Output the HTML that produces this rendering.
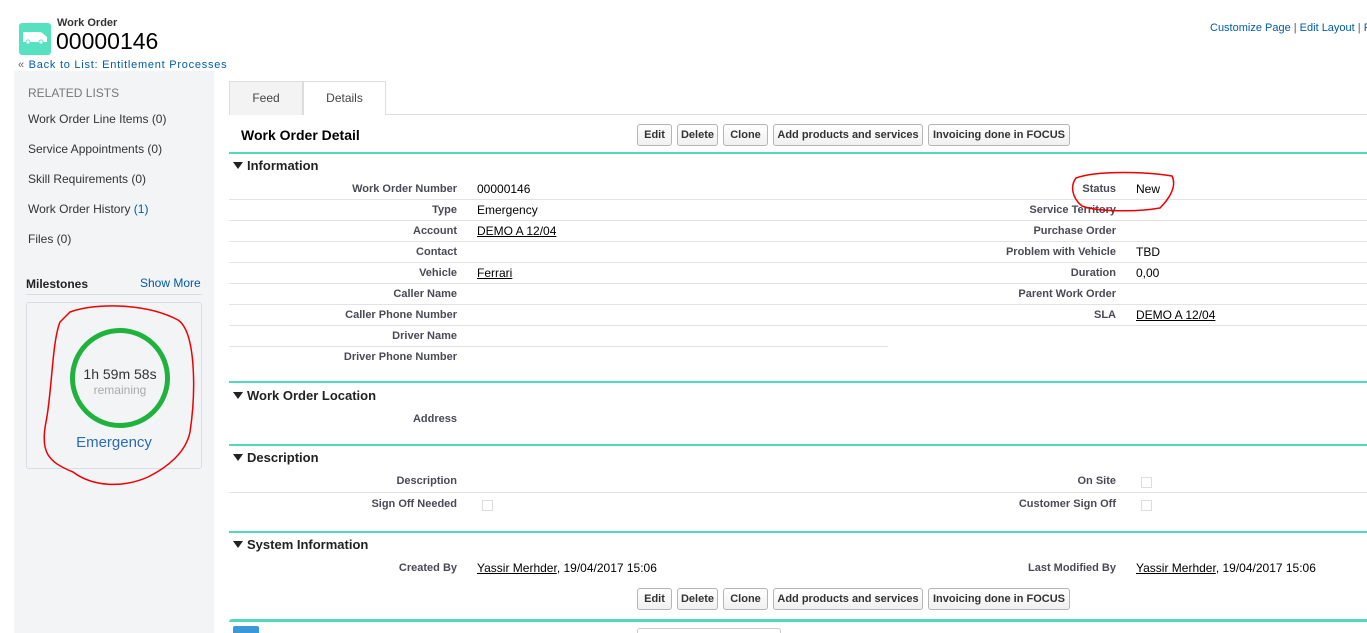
<!DOCTYPE html>
<html><head><meta charset="utf-8"><style>
*{margin:0;padding:0;box-sizing:border-box}
body{width:1367px;height:633px;overflow:hidden;background:#fff;font-family:"Liberation Sans",Arial,sans-serif;position:relative;color:#000}
.a{position:absolute;white-space:nowrap}
.lbl{position:absolute;font-size:11px;font-weight:bold;color:#4a4a56;text-align:right;white-space:nowrap;margin-top:1px}
.val{position:absolute;font-size:12px;color:#000;white-space:nowrap}
.u{text-decoration:underline}
.ln{position:absolute;height:1px;background:#e3e3e7}
.teal{position:absolute;left:229px;width:1138px;height:2px;background:#4fd9bd}
.sec{position:absolute;left:233px;font-size:13px;font-weight:bold;color:#222}
.sec:before{content:"";display:inline-block;border-left:5px solid transparent;border-right:5px solid transparent;border-top:7px solid #222;margin-right:4px;vertical-align:1px}
.btn{position:absolute;height:22px;border:1px solid #b5b5b5;border-radius:3px;background:linear-gradient(#fff,#f0f0f0);font-size:11px;font-weight:bold;color:#333;line-height:20px;text-align:center}
.rl{position:absolute;left:28px;font-size:12px;color:#333}
.rl span{color:#015ba7}
</style></head><body>
<div class="a" style="left:19px;top:23px;width:32px;height:32px;background:#56e2c0;border-radius:3px"></div>
<svg class="a" style="left:22px;top:31px" width="26" height="14" viewBox="0 0 26 14"><path d="M1 1h18l6 5v5H1z" fill="#fff"/><circle cx="6" cy="11" r="2.5" fill="#56e2c0"/><circle cx="19" cy="11" r="2.5" fill="#56e2c0"/><circle cx="6" cy="11" r="1.6" fill="#fff"/><circle cx="19" cy="11" r="1.6" fill="#fff"/></svg>
<div class="a" style="left:57px;top:17px;font-size:11px;font-weight:bold;color:#333">Work Order</div>
<div class="a" style="left:56px;top:28px;font-size:23px;color:#000">00000146</div>
<div class="a" style="left:18px;top:59px;font-size:11px;color:#015ba7;letter-spacing:0.75px"><span style="color:#666">«</span> Back to List: Entitlement Processes</div>
<div class="a" style="left:1210px;top:22px;font-size:11px;color:#015ba7">Customize Page <span style="color:#555">|</span> Edit Layout <span style="color:#555">|</span> P</div>
<div class="a" style="left:14px;top:71px;width:200px;height:562px;background:#f3f4f6"></div>
<div class="a" style="left:28px;top:86px;font-size:12px;color:#777">RELATED LISTS</div>
<div class="rl" style="top:112px">Work Order Line Items (0)</div>
<div class="rl" style="top:142px">Service Appointments (0)</div>
<div class="rl" style="top:172px">Skill Requirements (0)</div>
<div class="rl" style="top:202px">Work Order History <span>(1)</span></div>
<div class="rl" style="top:232px">Files (0)</div>
<div class="a" style="left:26px;top:277px;font-size:12px;font-weight:bold;color:#222">Milestones</div>
<div class="a" style="left:140px;top:276px;font-size:12px;color:#015ba7">Show More</div>
<div class="a" style="left:26px;top:294px;width:176px;height:1px;background:#d8dde6"></div>
<div class="a" style="left:26px;top:302px;width:176px;height:167px;border:1px solid #d8dde6;border-radius:3px"></div>
<div class="a" style="left:70px;top:328px;width:100px;height:100px;border:5px solid #1fb23c;border-radius:50%"></div>
<div class="a" style="left:70px;top:366px;width:100px;text-align:center;font-size:14px;color:#333">1h 59m 58s</div>
<div class="a" style="left:70px;top:383px;width:100px;text-align:center;font-size:12px;color:#aaa">remaining</div>
<div class="a" style="left:26px;top:434px;width:176px;text-align:center;font-size:15px;color:#2a6bb5">Emergency</div>
<svg class="a" style="left:38px;top:302px" width="160" height="186"><path d="M32 10C60 0 110 2 140 18 158 30 158 90 152 130 148 150 130 165 110 175 85 186 55 185 35 170 10 160 2 150 8 120 14 90 14 40 22 20Z" fill="none" stroke="#e00" stroke-width="1.5"/></svg>
<div class="a" style="left:229px;top:81px;width:74px;height:34px;background:#f3f3f3;border:1px solid #ddd;border-bottom:none;font-size:12px;color:#444;text-align:center;line-height:32px">Feed</div>
<div class="a" style="left:303px;top:81px;width:83px;height:34px;background:#fff;border:1px solid #ddd;border-bottom:none;font-size:12px;color:#444;text-align:center;line-height:32px">Details</div>
<div class="a" style="left:386px;top:114px;width:981px;height:1px;background:#ddd"></div>
<div class="a" style="left:241px;top:127px;font-size:14px;font-weight:bold">Work Order Detail</div>
<div class="btn" style="left:637px;top:124px;width:35px">Edit</div>
<div class="btn" style="left:677px;top:124px;width:41px">Delete</div>
<div class="btn" style="left:723px;top:124px;width:45px">Clone</div>
<div class="btn" style="left:773px;top:124px;width:150px">Add products and services</div>
<div class="btn" style="left:928px;top:124px;width:142px">Invoicing done in FOCUS</div>
<div class="teal" style="top:152px"></div>
<div class="sec" style="top:158px">Information</div>
<div class="lbl" style="right:910px;top:182px">Work Order Number</div><div class="val" style="left:477px;top:182px">00000146</div>
<div class="lbl" style="right:910px;top:203px">Type</div><div class="val" style="left:477px;top:203px">Emergency</div>
<div class="lbl" style="right:910px;top:224px">Account</div><div class="val u" style="left:477px;top:224px">DEMO A 12/04</div>
<div class="lbl" style="right:910px;top:245px">Contact</div>
<div class="lbl" style="right:910px;top:266px">Vehicle</div><div class="val u" style="left:477px;top:266px">Ferrari</div>
<div class="lbl" style="right:910px;top:287px">Caller Name</div>
<div class="lbl" style="right:910px;top:308px">Caller Phone Number</div>
<div class="lbl" style="right:910px;top:329px">Driver Name</div>
<div class="lbl" style="right:910px;top:350px">Driver Phone Number</div>
<div class="ln" style="left:229px;width:659px;top:199px"></div>
<div class="ln" style="left:229px;width:659px;top:220px"></div>
<div class="ln" style="left:229px;width:659px;top:241px"></div>
<div class="ln" style="left:229px;width:659px;top:262px"></div>
<div class="ln" style="left:229px;width:659px;top:283px"></div>
<div class="ln" style="left:229px;width:659px;top:304px"></div>
<div class="ln" style="left:229px;width:659px;top:325px"></div>
<div class="ln" style="left:229px;width:659px;top:346px"></div>
<div class="lbl" style="right:251px;top:182px">Status</div><div class="val" style="left:1136px;top:182px">New</div>
<div class="lbl" style="right:251px;top:203px">Service Territory</div>
<div class="lbl" style="right:251px;top:224px">Purchase Order</div>
<div class="lbl" style="right:251px;top:245px">Problem with Vehicle</div><div class="val" style="left:1136px;top:245px">TBD</div>
<div class="lbl" style="right:251px;top:266px">Duration</div><div class="val" style="left:1136px;top:266px">0,00</div>
<div class="lbl" style="right:251px;top:287px">Parent Work Order</div>
<div class="lbl" style="right:251px;top:308px">SLA</div><div class="val u" style="left:1136px;top:308px">DEMO A 12/04</div>
<div class="ln" style="left:888px;width:479px;top:199px"></div>
<div class="ln" style="left:888px;width:479px;top:220px"></div>
<div class="ln" style="left:888px;width:479px;top:241px"></div>
<div class="ln" style="left:888px;width:479px;top:262px"></div>
<div class="ln" style="left:888px;width:479px;top:283px"></div>
<div class="ln" style="left:888px;width:479px;top:304px"></div>
<div class="ln" style="left:888px;width:479px;top:325px"></div>
<svg class="a" style="left:1068px;top:166px" width="112" height="48"><path d="M8 12C30 4 80 6 104 10 110 22 98 36 92 42 70 46 30 46 14 40 4 32 2 20 8 12Z" fill="none" stroke="#e00" stroke-width="1.5"/></svg>
<div class="teal" style="top:381px"></div>
<div class="sec" style="top:388px">Work Order Location</div>
<div class="lbl" style="right:910px;top:412px">Address</div>
<div class="teal" style="top:444px"></div>
<div class="sec" style="top:450px">Description</div>
<div class="lbl" style="right:910px;top:474px">Description</div>
<div class="lbl" style="right:910px;top:497px">Sign Off Needed</div>
<div class="lbl" style="right:251px;top:474px">On Site</div>
<div class="lbl" style="right:251px;top:497px">Customer Sign Off</div>
<div class="a" style="left:482px;top:500px;width:11px;height:11px;border:1px solid #ddd"></div>
<div class="a" style="left:1141px;top:477px;width:11px;height:11px;border:1px solid #ddd"></div>
<div class="a" style="left:1141px;top:500px;width:11px;height:11px;border:1px solid #ddd"></div>
<div class="ln" style="left:229px;width:659px;top:492px"></div>
<div class="ln" style="left:888px;width:479px;top:492px"></div>
<div class="teal" style="top:531px"></div>
<div class="sec" style="top:537px">System Information</div>
<div class="lbl" style="right:910px;top:561px">Created By</div>
<div class="val" style="left:477px;top:561px"><span class="u">Yassir Merhder</span>, 19/04/2017 15:06</div>
<div class="lbl" style="right:251px;top:561px">Last Modified By</div>
<div class="val" style="left:1136px;top:561px"><span class="u">Yassir Merhder</span>, 19/04/2017 15:06</div>
<div class="btn" style="left:637px;top:588px;width:35px">Edit</div>
<div class="btn" style="left:677px;top:588px;width:41px">Delete</div>
<div class="btn" style="left:723px;top:588px;width:45px">Clone</div>
<div class="btn" style="left:773px;top:588px;width:150px">Add products and services</div>
<div class="btn" style="left:928px;top:588px;width:142px">Invoicing done in FOCUS</div>
<div class="a" style="left:229px;top:619px;width:1138px;height:3px;background:#4fd9bd;border-radius:3px 0 0 0"></div>
<div class="a" style="left:233px;top:626px;width:26px;height:7px;background:#3a9ad9;border-radius:2px 2px 0 0"></div>
<div class="a" style="left:637px;top:628px;width:144px;height:5px;border:1px solid #ccc;border-bottom:none;border-radius:3px 3px 0 0"></div>
</body></html>
